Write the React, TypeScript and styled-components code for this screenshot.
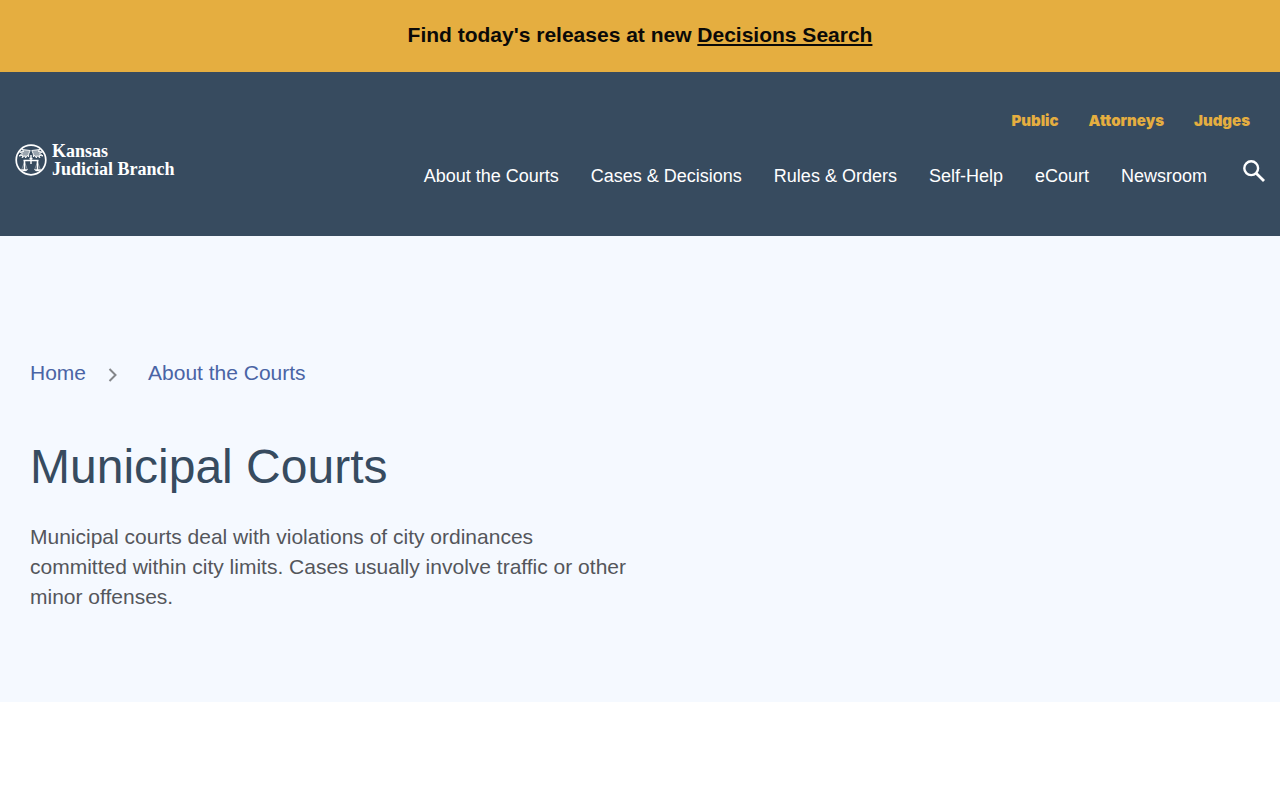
import React from "react";
import styled, { createGlobalStyle } from "styled-components";

const GlobalStyle = createGlobalStyle`
  *, *::before, *::after { box-sizing: border-box; }
  body {
    margin: 0;
    background: #ffffff;
    color: #54565b;
    font-family: "Liberation Sans", Arial, sans-serif;
    font-size: 21px;
    line-height: 29px;
  }
  a { color: inherit; text-decoration: none; }
`;

const Banner = styled.aside`
  padding: 20px 15px 23px;
  background: #e5ae40;
  color: #0b0a08;
  font-weight: 700;
  text-align: center;
`;

const BannerLink = styled.a`
  && { text-decoration: underline; }
`;

const Header = styled.header`
  display: flex;
  align-items: center;
  justify-content: space-between;
  gap: 32px;
  padding: 38px 15px 40px;
  background: #374b5f;
  color: #ffffff;
`;

const Brand = styled.a`
  display: flex;
  align-items: center;
  gap: 5px;
  padding-top: 14px;
`;

const BrandName = styled.span`
  display: flex;
  flex-direction: column;
  font-family: "Liberation Serif", "Times New Roman", serif;
  font-size: 18px;
  font-weight: 700;
  line-height: 18px;
  white-space: nowrap;
`;

const Menus = styled.div`
  display: flex;
  flex-direction: column;
  align-items: flex-end;
  gap: 24px;
`;

const AudienceNav = styled.nav`
  display: flex;
  gap: 30px;
  padding-right: 15px;
  color: #e5ae40;
  font-family: "Arial Black", Inter, sans-serif;
  font-size: 15px;
  font-weight: 900;
  line-height: 22px;
`;

const MainNav = styled.nav`
  display: flex;
  align-items: flex-start;
  gap: 32px;
  font-size: 18px;
  line-height: 40px;
  white-space: nowrap;
`;

const SearchButton = styled.button`
  display: flex;
  margin: 0 0 0 4px;
  padding: 4px 0;
  border: 0;
  background: none;
  color: inherit;
  cursor: pointer;
`;

const Hero = styled.main`
  padding: 122px 30px 90px;
  background: #f5f9ff;
`;

const Breadcrumbs = styled.nav`
  display: flex;
  align-items: center;
  color: #4a64a5;
`;

const Chevron = styled.svg`
  margin: 4px 30px 0 22px;
  flex: none;
`;

const Title = styled.h1`
  margin: 51px 0 26px;
  color: #374b5f;
  font-size: 48px;
  font-weight: 400;
  line-height: 58px;
`;

const Intro = styled.p`
  max-width: 600px;
  margin: 0;
  line-height: 30px;
`;

const Seal = () => (
  <svg width="32" height="32" viewBox="0 0 32 32" fill="none" stroke="currentColor" aria-hidden="true">
    <circle cx="16" cy="16" r="14.8" strokeWidth="1.7" />
    <g fill="currentColor" fillOpacity="0.5" strokeWidth="0.9">
      <path d="M15.200 6.500 7 5.500l2 1.800-4.500.7 3 1.200-3.500 2.800 4-.8-1 2.500 3.200-2 .3 2.300 2-2.800 1 1.800.2-3Z" />
      <path d="M16.800 6.500 25 5.500l-2 1.800 4.500.7-3 1.200 3.500 2.800-4-.8 1 2.500-3.200-2-.3 2.300-2-2.800-1 1.800-.2-3Z" />
    </g>
    <path d="M16 11v9M8.500 16.500h15M14.500 14.500h3" strokeWidth="1.400" />
    <path d="M9.500 16.500v9.500M22.500 16.500v9.500" strokeWidth="1.500" />
    <path d="M9.500 18l-3 8M9.500 18l3 8M22.500 18l-3 8M22.500 18l3 8" strokeWidth="0.400" />
    <path d="M6.500 25.500h6c-.6 2-5.400 2-6 0ZM19.500 25.500h6c-.6 2-5.400 2-6 0Z" fill="currentColor" strokeWidth="0.400" />
  </svg>
);

const audiences = ["Public", "Attorneys", "Judges"];
const sections = [
  "About the Courts",
  "Cases & Decisions",
  "Rules & Orders",
  "Self-Help",
  "eCourt",
  "Newsroom",
];

export default function App() {
  return (
    <>
      <GlobalStyle />
      <Banner>
        Find today's releases at new <BannerLink href="#decisions">Decisions Search</BannerLink>
      </Banner>
      <Header>
        <Brand href="#home">
          <Seal />
          <BrandName>
            <span>Kansas</span>
            <span>Judicial Branch</span>
          </BrandName>
        </Brand>
        <Menus>
          <AudienceNav aria-label="Audience">
            {audiences.map((name) => (
              <a key={name} href={`#${name}`}>{name}</a>
            ))}
          </AudienceNav>
          <MainNav aria-label="Main">
            {sections.map((name) => (
              <a key={name} href="#section">{name}</a>
            ))}
            <SearchButton type="button" aria-label="Search">
              <svg width="22" height="22" viewBox="0 0 22 22" fill="none" stroke="currentColor" strokeWidth="2.4" aria-hidden="true">
                <circle cx="8.2" cy="8.2" r="6.9" />
                <path d="M13.200 13.200l7.800 7.800" strokeWidth="2.800" />
              </svg>
            </SearchButton>
          </MainNav>
        </Menus>
      </Header>
      <Hero>
        <Breadcrumbs aria-label="Breadcrumb">
          <a href="#home">Home</a>
          <Chevron width="10" height="14" viewBox="0 0 10 14" fill="none" stroke="#84868a" strokeWidth="2" aria-hidden="true">
            <path d="M1.500 1l6 6-6 6" />
          </Chevron>
          <a href="#about">About the Courts</a>
        </Breadcrumbs>
        <Title>Municipal Courts</Title>
        <Intro>
          Municipal courts deal with violations of city ordinances committed within city limits.
          Cases usually involve traffic or other minor offenses.
        </Intro>
      </Hero>
    </>
  );
}
